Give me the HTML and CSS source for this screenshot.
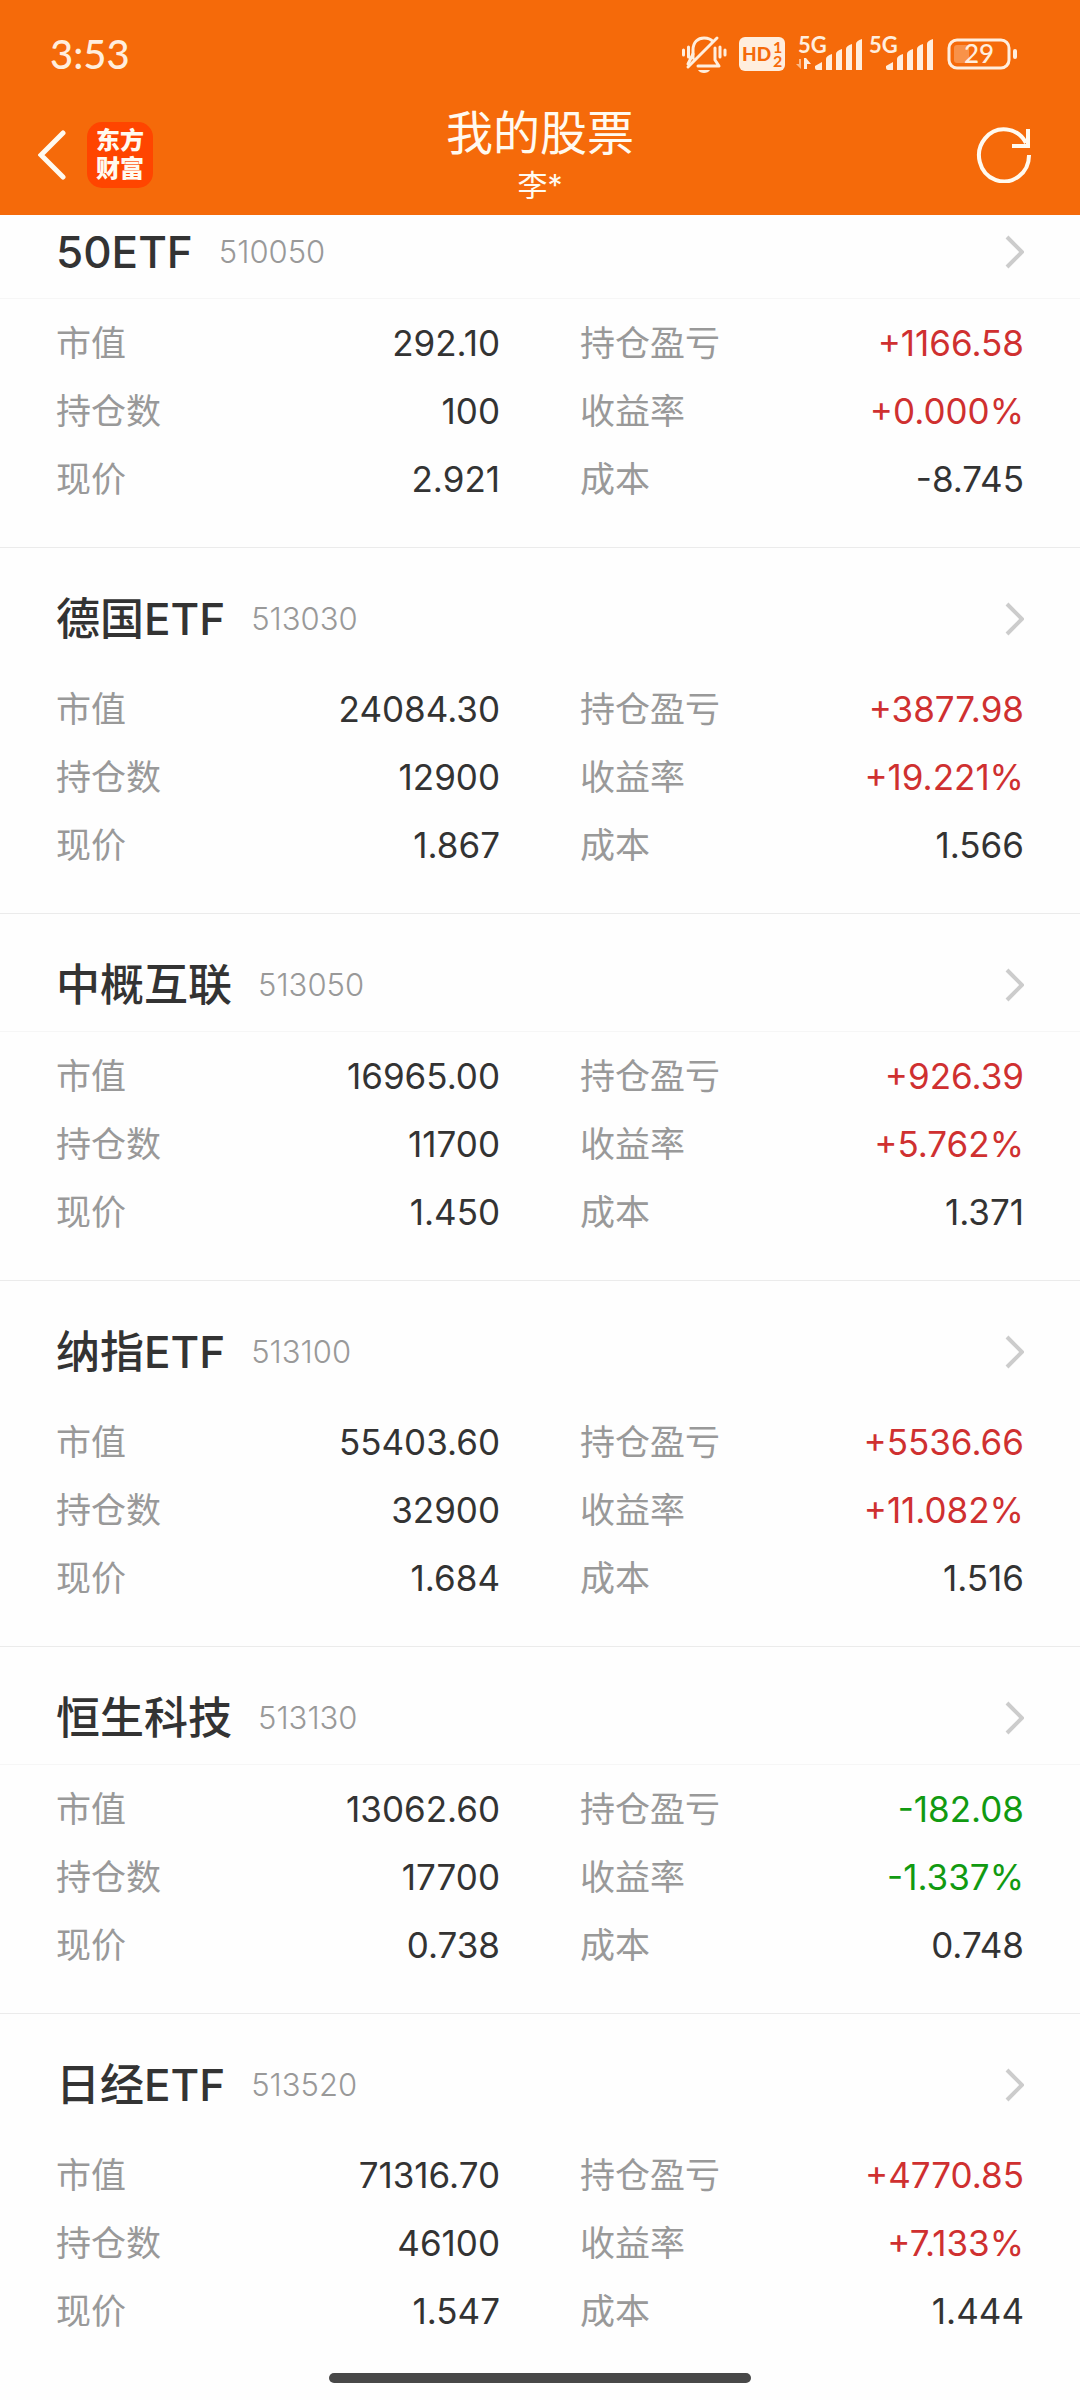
FILE: index.html
```html
<!DOCTYPE html>
<html lang="zh-CN">
<head>
<meta charset="utf-8">
<meta name="viewport" content="width=device-width, initial-scale=1">
<title>我的股票</title>
<link rel="stylesheet" href="styles.css">
</head>
<body>
<header class="top">
  <div class="status">
    <time class="clock">3:53</time>
    <div class="status-icons">
      <svg class="bell" width="46" height="40" viewBox="0 0 46 40" fill="none" stroke="currentColor" stroke-width="3" stroke-linecap="round" stroke-linejoin="round" aria-hidden="true">
        <path d="M12 24V16C12 8 17 4 23 4c4 0 7 1 9 4M34 14v12l4 6H17M36 4 7 33"/>
        <path d="M12 20 7 30M2.500 16v5M7.500 13v10M39 13v10M44 16v5"/>
        <path d="M17 36h12c-2 4-10 4-12 0z" fill="currentColor" stroke="none"/>
      </svg>
      <svg class="hd" width="46" height="34" viewBox="0 0 46 34" aria-hidden="true">
        <rect width="46" height="34" rx="6" fill="currentColor"/>
        <text class="hd-main" x="3" y="24">HD</text>
        <text class="hd-sub" x="34" y="16">1</text>
        <text class="hd-sub" x="34" y="30">2</text>
      </svg>
      <svg class="signal" width="68" height="52" viewBox="0 -8 68 52" fill="currentColor" aria-hidden="true">
        <text class="net" x="2" y="17">5G</text>
        <path d="M5 23v10L0 28h3v-5z" opacity=".6"/><path d="M8 33V22h2l5 6h-4v5z"/>
        <path d="M19 30l7-4v8h-5q-2 0-2-2zM30 23q0-3 6-5v16h-6zM40 18q0-3 6-5v21h-6zM50 13q0-3 6-5v26h-6zM60 8q0-3 6-5v31h-6z"/>
      </svg>
      <svg class="signal" width="68" height="52" viewBox="0 -8 68 52" fill="currentColor" aria-hidden="true">
        <text class="net" x="2" y="17">5G</text>
        <path d="M19 30l7-4v8h-5q-2 0-2-2zM30 23q0-3 6-5v16h-6zM40 18q0-3 6-5v21h-6zM50 13q0-3 6-5v26h-6zM60 8q0-3 6-5v31h-6z"/>
      </svg>
      <svg class="battery" width="70" height="32" viewBox="0 0 70 32" aria-label="29%">
        <rect x="2" y="2" width="60" height="28" rx="8" fill="none" stroke="currentColor" stroke-width="3"/>
        <rect x="7" y="7" width="15" height="18" rx="3" fill="currentColor" opacity=".3"/>
        <rect x="66" y="11" width="4" height="10" rx="2" fill="currentColor"/>
        <text class="charge" x="32" y="25" text-anchor="middle">29</text>
      </svg>
    </div>
  </div>
  <nav class="bar">
    <div class="bar-left">
      <button class="back" type="button" aria-label="返回">
        <svg width="28" height="50" viewBox="0 0 28 50" fill="none" stroke="currentColor" stroke-width="5" stroke-linecap="round" aria-hidden="true"><path d="M25 3 3 25l22 22" stroke-linejoin="miter"/></svg>
      </button>
      <a class="logo" href="#"><span>东方</span><span>财富</span></a>
    </div>
    <div class="heading">
      <h1>我的股票</h1>
      <p>李*</p>
    </div>
    <button class="refresh" type="button" aria-label="刷新">
      <svg width="56" height="56" viewBox="0 0 56 56" fill="none" stroke="currentColor" stroke-width="4" aria-hidden="true"><path d="M53 28A25 26 0 1 1 50 16M52 2v17H36"/></svg>
    </button>
  </nav>
</header>

<main class="list">
  <section class="card">
    <a class="card-head" href="#"><h2>50ETF</h2><span class="code">510050</span><svg class="go" width="20" height="34" viewBox="0 0 20 34" aria-hidden="true"><path d="M3 2l15 15L3 32"/></svg></a>
    <dl class="facts">
      <div><dt>市值</dt><dd>292.10</dd></div><div><dt>持仓盈亏</dt><dd class="up">+1166.58</dd></div>
      <div><dt>持仓数</dt><dd>100</dd></div><div><dt>收益率</dt><dd class="up">+0.000%</dd></div>
      <div><dt>现价</dt><dd>2.921</dd></div><div><dt>成本</dt><dd>-8.745</dd></div>
    </dl>
  </section>
  <section class="card">
    <a class="card-head" href="#"><h2>德国ETF</h2><span class="code">513030</span><svg class="go" width="20" height="34" viewBox="0 0 20 34" aria-hidden="true"><path d="M3 2l15 15L3 32"/></svg></a>
    <dl class="facts">
      <div><dt>市值</dt><dd>24084.30</dd></div><div><dt>持仓盈亏</dt><dd class="up">+3877.98</dd></div>
      <div><dt>持仓数</dt><dd>12900</dd></div><div><dt>收益率</dt><dd class="up">+19.221%</dd></div>
      <div><dt>现价</dt><dd>1.867</dd></div><div><dt>成本</dt><dd>1.566</dd></div>
    </dl>
  </section>
  <section class="card">
    <a class="card-head" href="#"><h2>中概互联</h2><span class="code">513050</span><svg class="go" width="20" height="34" viewBox="0 0 20 34" aria-hidden="true"><path d="M3 2l15 15L3 32"/></svg></a>
    <dl class="facts">
      <div><dt>市值</dt><dd>16965.00</dd></div><div><dt>持仓盈亏</dt><dd class="up">+926.39</dd></div>
      <div><dt>持仓数</dt><dd>11700</dd></div><div><dt>收益率</dt><dd class="up">+5.762%</dd></div>
      <div><dt>现价</dt><dd>1.450</dd></div><div><dt>成本</dt><dd>1.371</dd></div>
    </dl>
  </section>
  <section class="card">
    <a class="card-head" href="#"><h2>纳指ETF</h2><span class="code">513100</span><svg class="go" width="20" height="34" viewBox="0 0 20 34" aria-hidden="true"><path d="M3 2l15 15L3 32"/></svg></a>
    <dl class="facts">
      <div><dt>市值</dt><dd>55403.60</dd></div><div><dt>持仓盈亏</dt><dd class="up">+5536.66</dd></div>
      <div><dt>持仓数</dt><dd>32900</dd></div><div><dt>收益率</dt><dd class="up">+11.082%</dd></div>
      <div><dt>现价</dt><dd>1.684</dd></div><div><dt>成本</dt><dd>1.516</dd></div>
    </dl>
  </section>
  <section class="card">
    <a class="card-head" href="#"><h2>恒生科技</h2><span class="code">513130</span><svg class="go" width="20" height="34" viewBox="0 0 20 34" aria-hidden="true"><path d="M3 2l15 15L3 32"/></svg></a>
    <dl class="facts">
      <div><dt>市值</dt><dd>13062.60</dd></div><div><dt>持仓盈亏</dt><dd class="down">-182.08</dd></div>
      <div><dt>持仓数</dt><dd>17700</dd></div><div><dt>收益率</dt><dd class="down">-1.337%</dd></div>
      <div><dt>现价</dt><dd>0.738</dd></div><div><dt>成本</dt><dd>0.748</dd></div>
    </dl>
  </section>
  <section class="card">
    <a class="card-head" href="#"><h2>日经ETF</h2><span class="code">513520</span><svg class="go" width="20" height="34" viewBox="0 0 20 34" aria-hidden="true"><path d="M3 2l15 15L3 32"/></svg></a>
    <dl class="facts">
      <div><dt>市值</dt><dd>71316.70</dd></div><div><dt>持仓盈亏</dt><dd class="up">+4770.85</dd></div>
      <div><dt>持仓数</dt><dd>46100</dd></div><div><dt>收益率</dt><dd class="up">+7.133%</dd></div>
      <div><dt>现价</dt><dd>1.547</dd></div><div><dt>成本</dt><dd>1.444</dd></div>
    </dl>
  </section>
</main>
<div class="home-bar"></div>
</body>
</html>
```
FILE: styles.css
```css
* { box-sizing: border-box; }

body {
  margin: 0;
  background: #fefefe;
  color: #333;
  font-family: Inter, "Noto Sans CJK SC", sans-serif;
}

h1, h2, p, dl, dd { margin: 0; }
a { color: inherit; text-decoration: none; }
svg { display: block; flex: none; }

button {
  padding: 0;
  border: 0;
  background: none;
  color: inherit;
}

/* Orange header: stays above the scrolled list */
.top {
  position: sticky;
  top: 0;
  z-index: 1;
  background: #f56a0a;
  color: #fffaf0;
}

.status {
  display: flex;
  align-items: center;
  justify-content: space-between;
  height: 108px;
  padding: 0 63px 0 50px;
  color: #ffeede;
}

.clock {
  font-family: Lato, sans-serif;
  font-size: 40px;
  font-weight: 500;
}

.status-icons { display: flex; align-items: center; }
.hd { margin-left: 12px; }
.signal { margin-left: 11px; }
.signal + .signal { margin-left: 3px; }
.battery { margin-left: 12px; }

.hd-main, .hd-sub, .net, .charge { font-family: Lato, sans-serif; font-weight: 700; }
.hd-main { font-size: 19px; font-weight: 900; fill: #f56a0a; }
.hd-sub { font-size: 16px; fill: #f56a0a; }
.net { font-size: 22px; }
.charge { font-size: 26px; font-weight: 500; fill: currentColor; }

.bar {
  display: grid;
  grid-template-columns: 1fr auto 1fr;
  align-items: center;
  height: 107px;
  padding: 0 38px 14px;
}

.bar-left { display: flex; align-items: center; gap: 21px; }

.logo {
  display: flex;
  flex-direction: column;
  align-items: center;
  justify-content: center;
  width: 66px;
  height: 66px;
  border-radius: 15px;
  background: #ff4500;
  font-size: 24px;
  font-weight: 900;
  line-height: 28px;
}

.heading { text-align: center; }
.heading h1 { font-size: 47px; font-weight: 400; line-height: 60px; }
.heading p { font-size: 30px; line-height: 44px; }
.refresh { justify-self: end; margin-right: 10px; }

.bar { height: 107px; padding-bottom: 14px; align-content: center; grid-template-rows: 93px; }

/* The list rests part-way scrolled, its first card under the header */
.list { margin-top: -34px; }

.card {
  padding-top: 24px;
  border-bottom: 1px solid #ebebeb;
}
.card:last-child { border-bottom: 0; }

.card-head {
  display: flex;
  align-items: center;
  height: 93px;
  padding: 0 56px;
}
.card:nth-child(odd) .card-head { height: 94px; border-bottom: 1px solid #f6f6f6; }

.card-head h2 { font-size: 44px; font-weight: 500; line-height: 64px; }
.code { margin-left: 26px; color: #999; font-size: 31px; font-weight: 300; }

.go {
  margin-left: auto;
  fill: none;
  stroke: #ccc;
  stroke-width: 4;
}

.facts {
  display: grid;
  grid-template-columns: 1fr 1fr;
  column-gap: 80px;
  padding: 10px 56px 34px;
  font-size: 35px;
  line-height: 68px;
}
.facts div { display: flex; justify-content: space-between; }
dt { color: #999; }
.up { color: #cf3030; }
.down { color: #119a11; }

.home-bar {
  position: fixed;
  right: 0;
  bottom: 17px;
  left: 0;
  width: 39%;
  height: 10px;
  margin: 0 auto;
  border-radius: 5px;
  background: #484848;
}
```
